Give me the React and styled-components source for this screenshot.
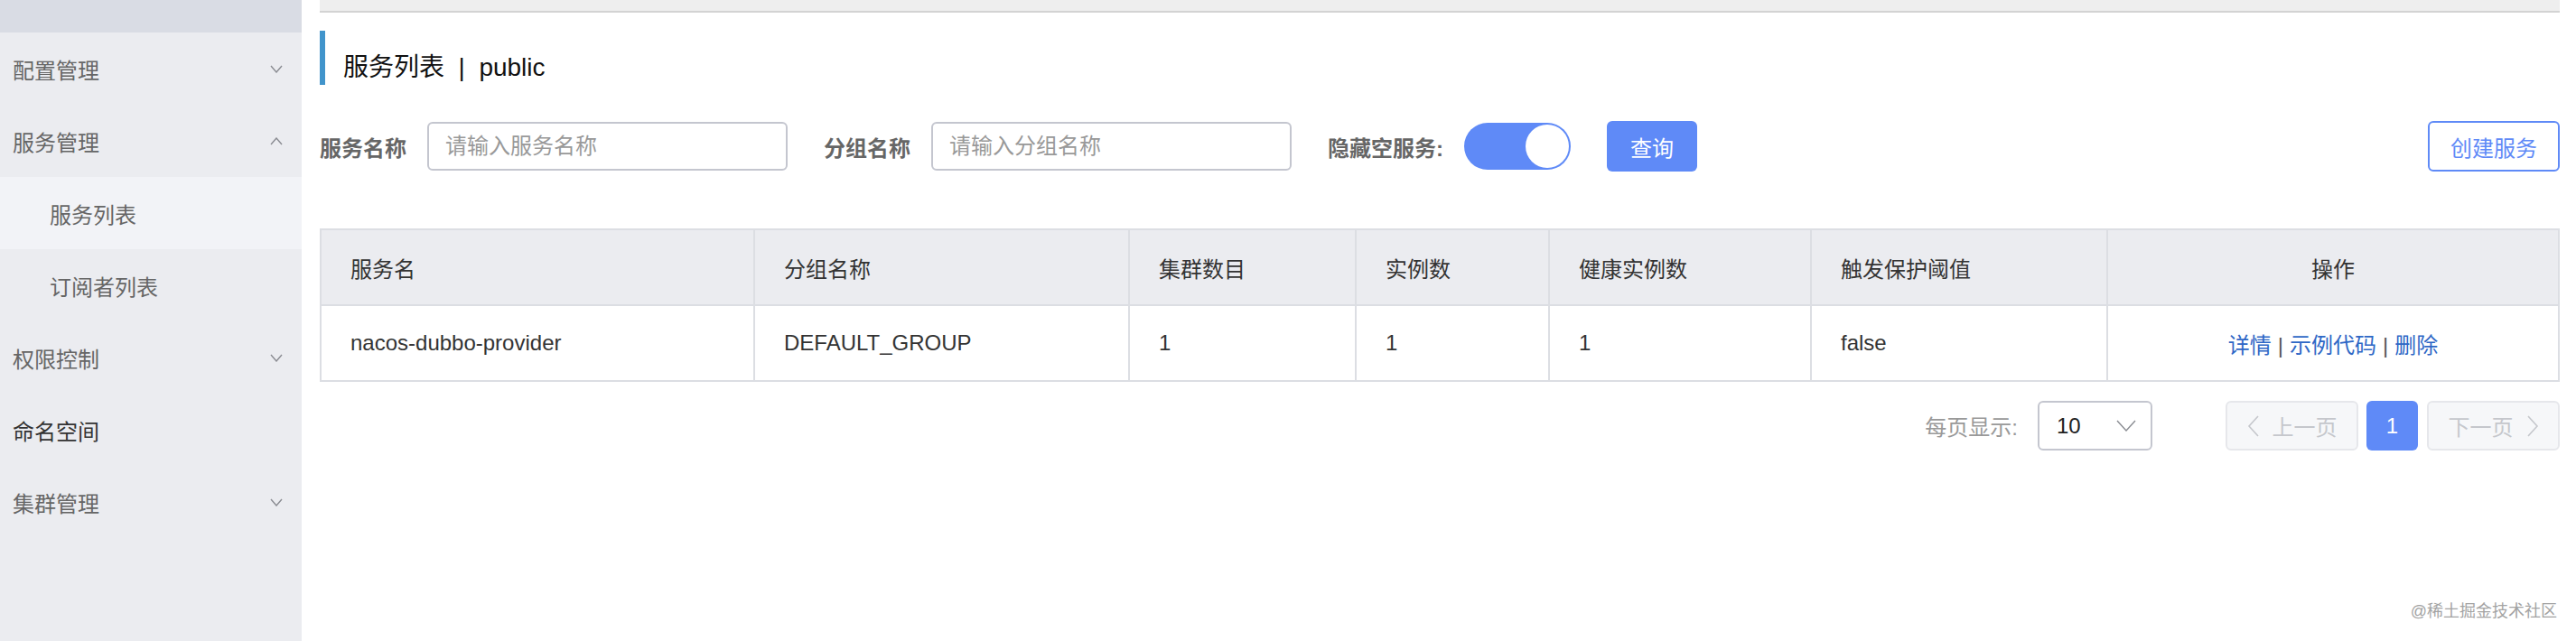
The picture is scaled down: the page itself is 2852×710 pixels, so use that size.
import React from 'react';
import styled, { createGlobalStyle } from 'styled-components';

const GlobalStyle = createGlobalStyle`
    html, body {
        margin: 0;
        padding: 0;
        background: #fff;
    }
    body {
        font-family: "Liberation Sans", "Noto Sans CJK SC", sans-serif;
        color: #333;
    }
    * {
        box-sizing: border-box;
    }
`

const menu = [
    { label: "配置管理", arrow: "down" },
    { label: "服务管理", arrow: "up" },
    { label: "服务列表", sub: true, active: true },
    { label: "订阅者列表", sub: true },
    { label: "权限控制", arrow: "down" },
    { label: "命名空间", dark: true },
    { label: "集群管理", arrow: "down" },
]

const columns = [
    { title: "服务名", width: 480 },
    { title: "分组名称", width: 415 },
    { title: "集群数目", width: 251 },
    { title: "实例数", width: 214 },
    { title: "健康实例数", width: 290 },
    { title: "触发保护阈值", width: 328 },
    { title: "操作", width: 500, center: true },
]

const rows = [
    ["nacos-dubbo-provider", "DEFAULT_GROUP", "1", "1", "1", "false"],
]

function Chevron({ dir = "down", color = "#8a8c92", w = 14, h = 9 }) {
    const pts = dir === "up" ? `1,${h - 1} ${w / 2},1 ${w - 1},${h - 1}` : `1,1 ${w / 2},${h - 1} ${w - 1},1`
    return (
        <svg width={w} height={h} viewBox={`0 0 ${w} ${h}`}>
            <polyline points={pts} fill="none" stroke={color} strokeWidth="1.4" />
        </svg>
    )
}

function SideArrow({ dir = "left" }) {
    const pts = dir === "left" ? "12,1 2,12 12,23" : "2,1 12,12 2,23"
    return (
        <svg width="14" height="24" viewBox="0 0 14 24">
            <polyline points={pts} fill="none" stroke="#c5c7cc" strokeWidth="1.6" />
        </svg>
    )
}

function App() {
    return (
        <Page>
            <GlobalStyle />
            <Sidebar>
                <SideTop />
                {menu.map((m) => (
                    <MenuItem key={m.label} sub={m.sub} active={m.active} dark={m.dark}>
                        <span>{m.label}</span>
                        {m.arrow && <Chevron dir={m.arrow} />}
                    </MenuItem>
                ))}
            </Sidebar>
            <Main>
                <TopStrip />
                <Title>服务列表 &nbsp;|&nbsp; public</Title>
                <Filters>
                    <Label>服务名称</Label>
                    <Input placeholder="请输入服务名称" />
                    <Label gap>分组名称</Label>
                    <Input placeholder="请输入分组名称" />
                    <Label gap>隐藏空服务:</Label>
                    <Toggle>
                        <Knob />
                    </Toggle>
                    <PrimaryButton>查询</PrimaryButton>
                    <Spacer />
                    <OutlineButton>创建服务</OutlineButton>
                </Filters>
                <Table>
                    <colgroup>
                        {columns.map((c) => (
                            <col key={c.title} style={{ width: c.width }} />
                        ))}
                    </colgroup>
                    <thead>
                        <tr>
                            {columns.map((c) => (
                                <Th key={c.title} center={c.center}>{c.title}</Th>
                            ))}
                        </tr>
                    </thead>
                    <tbody>
                        {rows.map((r) => (
                            <tr key={r[0]}>
                                {r.map((v, i) => (
                                    <Td key={i}>{v}</Td>
                                ))}
                                <Td center>
                                    <Link>详情</Link>
                                    <Sep>|</Sep>
                                    <Link>示例代码</Link>
                                    <Sep>|</Sep>
                                    <Link>删除</Link>
                                </Td>
                            </tr>
                        ))}
                    </tbody>
                </Table>
                <Pager>
                    <PagerLabel>每页显示:</PagerLabel>
                    <Select>
                        <span>10</span>
                        <Chevron dir="down" color="#8a8c92" w={22} h={13} />
                    </Select>
                    <PageButton>
                        <SideArrow dir="left" />
                        <span>上一页</span>
                    </PageButton>
                    <PageNumber>1</PageNumber>
                    <PageButton>
                        <span>下一页</span>
                        <SideArrow dir="right" />
                    </PageButton>
                </Pager>
            </Main>
            <Watermark>@稀土掘金技术社区</Watermark>
        </Page>
    )
}

export default App;

const Page = styled.div`
    position: relative;
    display: flex;
    width: 100%;
    height: 710px;
    overflow: hidden;
`

const Sidebar = styled.div`
    width: 334px;
    flex-shrink: 0;
    background: #ebecf0;
`

const SideTop = styled.div`
    height: 36px;
    background: #d9dce4;
`

const MenuItem = styled.div`
    display: flex;
    align-items: center;
    justify-content: space-between;
    height: 80px;
    padding: 0 21px 0 ${(p) => (p.sub ? "55px" : "14px")};
    font-size: 24px;
    color: ${(p) => (p.dark ? "#333" : "#666")};
    background: ${(p) => (p.active ? "#f2f3f7" : "transparent")};
`

const Main = styled.div`
    flex: 1;
    padding: 0 19px 0 20px;
    background: #fff;
`

const TopStrip = styled.div`
    height: 14px;
    background: #eeeeee;
    border-bottom: 2px solid #d3d3d3;
`

const Title = styled.div`
    display: flex;
    align-items: center;
    height: 60px;
    margin-top: 20px;
    padding: 16px 0 0 20px;
    border-left: 6px solid #4194cb;
    font-size: 28px;
    color: #111;
`

const Filters = styled.div`
    display: flex;
    align-items: center;
    height: 56px;
    margin-top: 40px;
`

const Label = styled.span`
    margin-left: ${(p) => (p.gap ? "40px" : "0")};
    margin-right: 23px;
    font-size: 24px;
    font-weight: bold;
    color: #666;
    white-space: nowrap;
`

const Input = styled.input`
    width: 399px;
    height: 54px;
    padding: 0 18px;
    border: 2px solid #c4c6cf;
    border-radius: 6px;
    font-family: inherit;
    font-size: 24px;
    color: #333;
    outline: none;
    &::placeholder {
        color: #999;
    }
`

const Toggle = styled.div`
    display: flex;
    justify-content: flex-end;
    align-items: center;
    width: 118px;
    height: 52px;
    padding: 2px;
    border-radius: 26px;
    background: #5f8af7;
`

const Knob = styled.div`
    width: 48px;
    height: 48px;
    border-radius: 50%;
    background: #fff;
`

const PrimaryButton = styled.button`
    width: 100px;
    height: 56px;
    margin-left: 40px;
    border: none;
    border-radius: 6px;
    background: #5f8af7;
    color: #fff;
    font-family: inherit;
    font-size: 24px;
`

const Spacer = styled.div`
    flex: 1;
`

const OutlineButton = styled.button`
    width: 146px;
    height: 56px;
    border: 2px solid #5f8af7;
    border-radius: 6px;
    background: #fff;
    color: #5f8af7;
    font-family: inherit;
    font-size: 24px;
`

const Table = styled.table`
    width: 100%;
    margin-top: 63px;
    border-collapse: collapse;
    table-layout: fixed;
    border: 2px solid #dcdee3;
`

const Th = styled.th`
    height: 84px;
    padding: 0 32px;
    background: #ebecf0;
    border: 2px solid #dcdee3;
    font-size: 24px;
    font-weight: normal;
    color: #333;
    text-align: ${(p) => (p.center ? "center" : "left")};
`

const Td = styled.td`
    height: 84px;
    padding: 0 32px;
    border: 2px solid #dcdee3;
    font-size: 24px;
    color: #333;
    text-align: ${(p) => (p.center ? "center" : "left")};
`

const Link = styled.a`
    color: #2e67c6;
    cursor: pointer;
`

const Sep = styled.span`
    margin: 0 7px;
    color: #555;
`

const Pager = styled.div`
    display: flex;
    justify-content: flex-end;
    align-items: center;
    margin-top: 21px;
`

const PagerLabel = styled.span`
    margin-right: 22px;
    font-size: 24px;
    color: #999;
`

const Select = styled.div`
    display: flex;
    align-items: center;
    justify-content: space-between;
    width: 127px;
    height: 55px;
    padding: 0 16px 0 19px;
    margin-right: 81px;
    border: 2px solid #c4c6cf;
    border-radius: 6px;
    font-size: 24px;
    color: #222;
`

const PageButton = styled.div`
    display: flex;
    align-items: center;
    justify-content: center;
    gap: 14px;
    width: 147px;
    height: 55px;
    border: 2px solid #e6e7eb;
    border-radius: 6px;
    background: #f6f7f9;
    font-size: 24px;
    color: #c5c7cc;
`

const PageNumber = styled.div`
    display: flex;
    align-items: center;
    justify-content: center;
    width: 57px;
    height: 55px;
    margin: 0 10px 0 9px;
    border-radius: 6px;
    background: #5f8af7;
    font-size: 24px;
    color: #fff;
`

const Watermark = styled.div`
    position: absolute;
    right: 21px;
    bottom: 22px;
    font-size: 18px;
    color: #a3a3a3;
    text-shadow: 0 0 1px #fff;
`
